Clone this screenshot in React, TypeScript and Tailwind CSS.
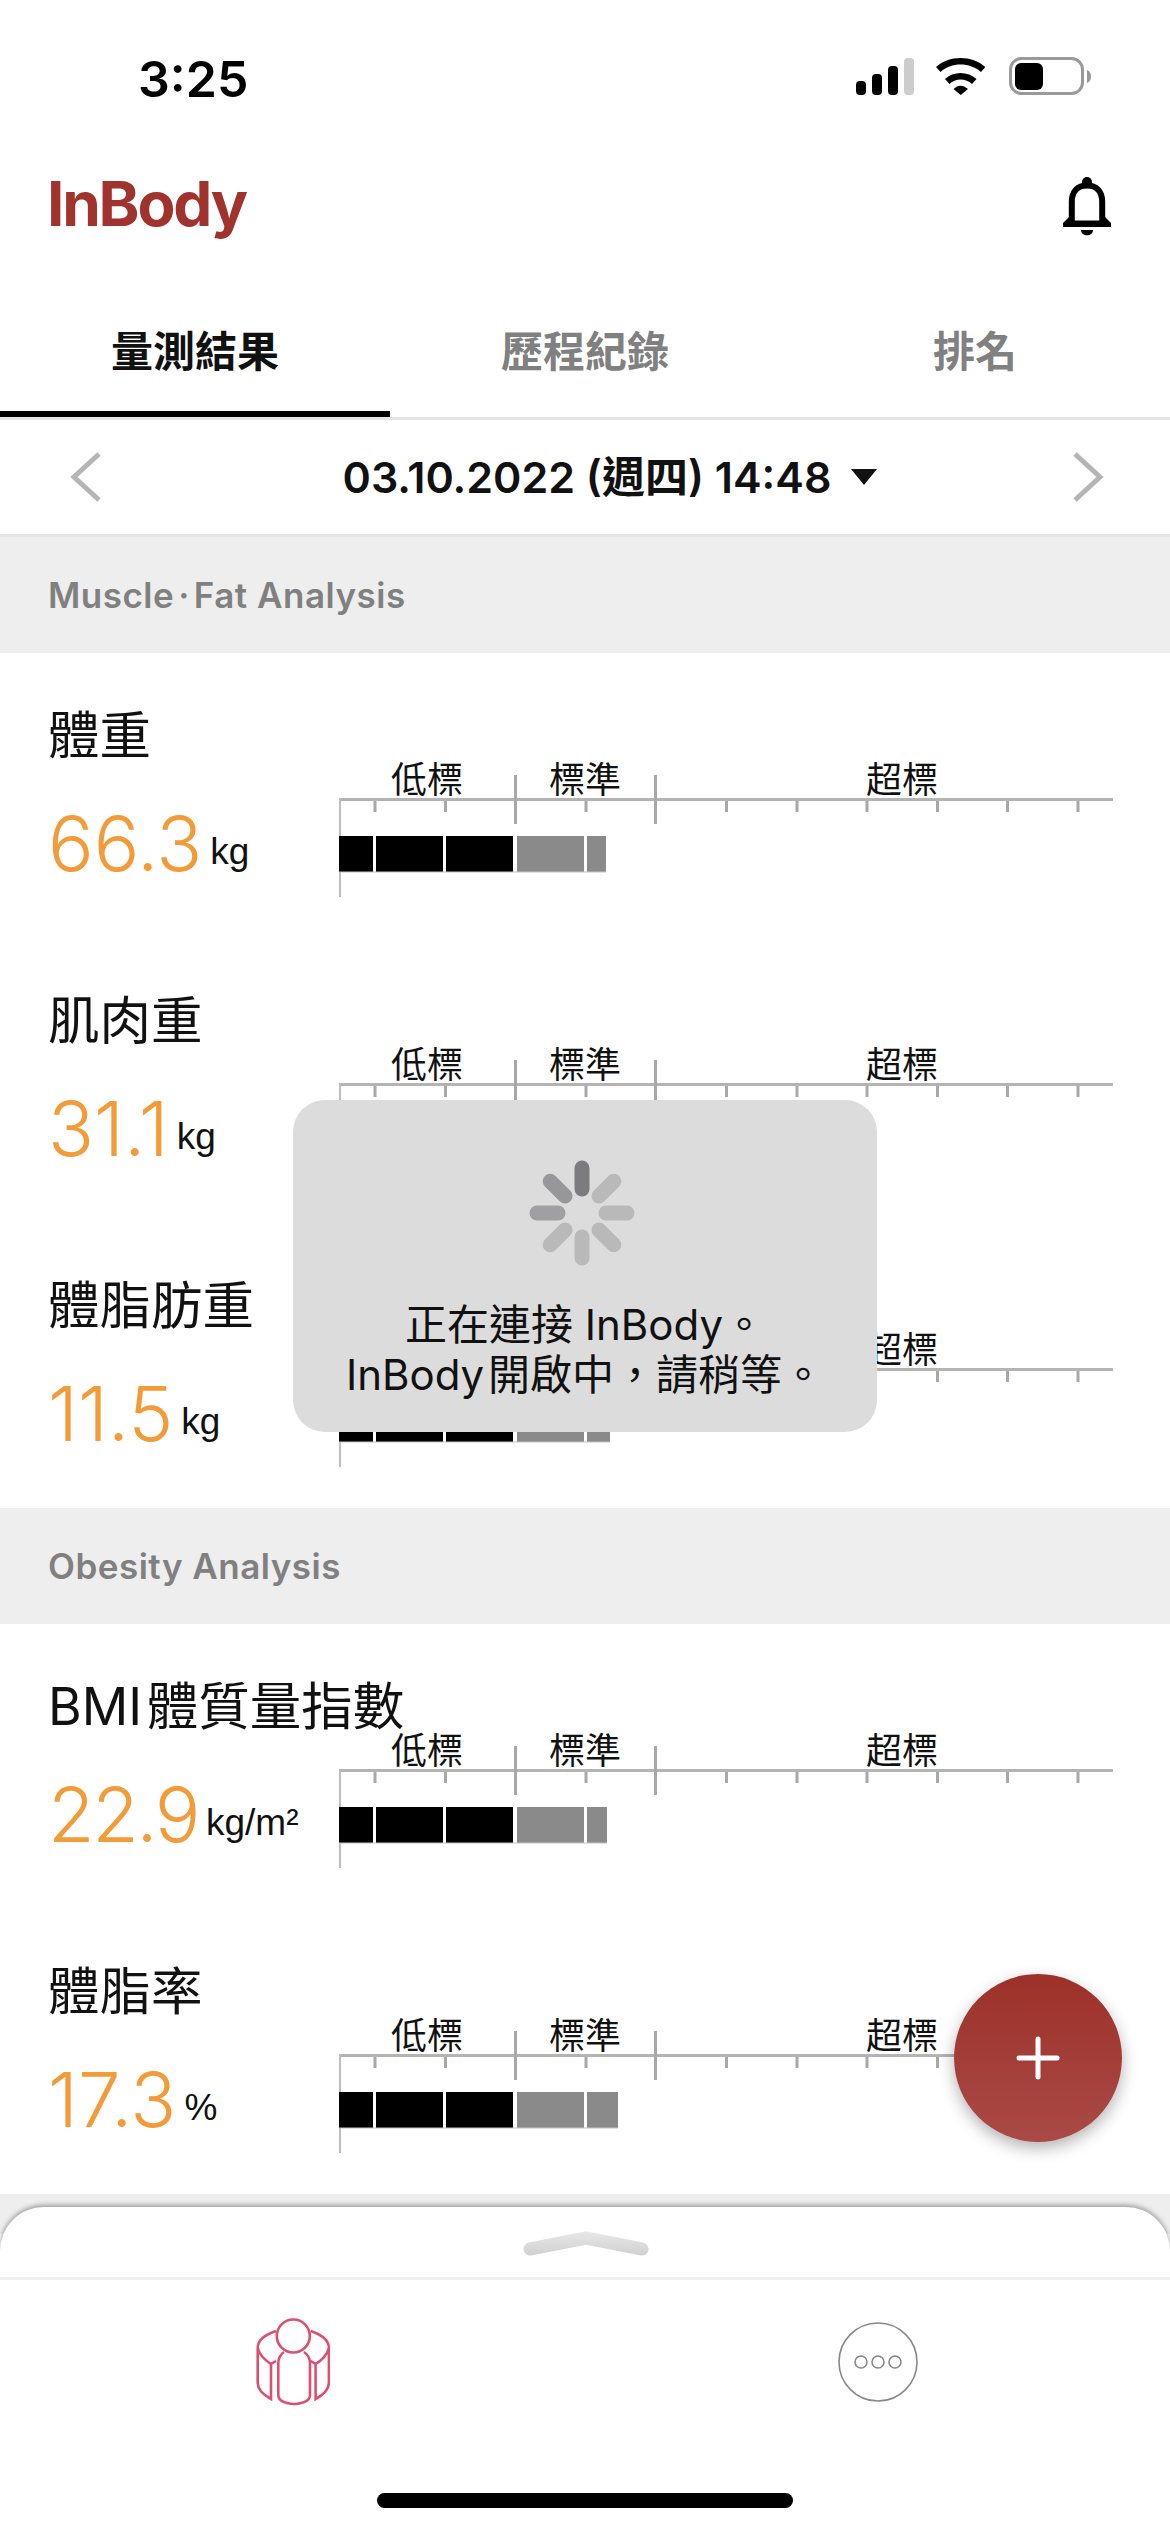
import type { ReactNode } from "react";

const majors = [176, 316];
const minors = [35.5, 106, 246.5, 387, 457.5, 527.5, 598, 668, 738.5];

type Row = { name: string; value: string; unit: string; end: number; tight?: boolean };

function Chart({ end }: { end: number }) {
  const segs: [number, number, string][] = [
    [0, 34, "#000"],
    [37, 104, "#000"],
    [107, 174, "#000"],
    [178, 245, "#8a8a8a"],
    [248, end, "#8a8a8a"],
  ];
  return (
    <div className="w-[774px] pt-[105px]">
      <div className="flex h-[44px] items-center text-[36px] leading-[44px] text-[#111]">
        <div className="w-[176px] text-center">低標</div>
        <div className="w-[140px] text-center">標準</div>
        <div className="w-[458px] whitespace-nowrap pl-[36px] text-center">超標</div>
      </div>
      <svg width="774" height="122" className="relative -mt-[27px] block">
        <rect x="0" y="23" width="774" height="3" fill="#b4b4b4" />
        <rect x="0" y="23" width="2" height="99" fill="#bdbdbd" />
        {majors.map((x) => (
          <rect key={x} x={x - 1} y="0" width="3" height="49" fill="#a8a8a8" />
        ))}
        {minors.map((x) => (
          <rect key={x} x={x - 1} y="26" width="3" height="11" fill="#a8a8a8" />
        ))}
        {segs.map(([a, b, c]) => (
          <rect key={a} x={a} y="61" width={b - a} height="36" fill={c} />
        ))}
        <rect x="0" y="96.5" width={end} height="1" fill="#c4c4c4" />
      </svg>
    </div>
  );
}

function MetricRow({ name, value, unit, end, tight }: Row) {
  return (
    <div className="flex h-[285px] bg-white">
      <div className="w-[339px] shrink-0 pl-[48px] pt-[57px]">
        <div className="h-[50px] whitespace-nowrap text-[51.5px] leading-[50px] text-[#111]">{name}</div>
        <div className="mt-[43px] flex items-baseline whitespace-nowrap">
          <span className={tight ? "text-[76px] font-light leading-[80px] tracking-[-2.5px] text-[#f29b38]" : "text-[76px] font-light leading-[80px] text-[#f29b38]"}>
            {value}
          </span>
          <span className="ml-[8px] -translate-y-[7px] font-['Liberation_Sans',sans-serif] text-[37px] leading-[40px] text-[#111]">
            {unit}
          </span>
        </div>
      </div>
      <Chart end={end} />
    </div>
  );
}

function SectionHead({ title }: { title: ReactNode }) {
  return (
    <div className="flex h-[116px] items-center bg-[#eeeeee] pl-[48px] text-[35px] font-semibold tracking-[0.5px] text-[#808080]">
      {title}
    </div>
  );
}

function Spinner() {
  const spokes = ["#7c7c80", "#b9b9b9", "#b9b9b9", "#b9b9b9", "#b9b9b9", "#b9b9b9", "#a0a0a2", "#979799"];
  return (
    <svg width="110" height="110" viewBox="-55 -55 110 110" className="-ml-[6px] block">
      {spokes.map((c, i) => (
        <line
          key={i}
          x1="0"
          y1="-24"
          x2="0"
          y2="-45"
          stroke={c}
          strokeWidth="15"
          strokeLinecap="round"
          transform={`rotate(${i * 45})`}
        />
      ))}
    </svg>
  );
}

export default function App() {
  return (
    <div className="relative h-[2532px] w-[1170px] overflow-hidden bg-white font-['Inter','Noto_Sans_CJK_TC',sans-serif]">
      {/* status bar */}
      <div className="flex h-[120px] items-start justify-between pl-[138px] pr-[77px] pt-[52px]">
        <div className="text-[50px] font-semibold leading-[54px] text-black">3:25</div>
        <div className="flex items-start gap-[22px] pt-[6px]">
          <svg width="58" height="38" className="block">
            <rect x="0" y="23" width="10" height="14" rx="4" fill="#000" />
            <rect x="16" y="16" width="10" height="21" rx="4" fill="#000" />
            <rect x="32" y="8" width="10" height="29" rx="4" fill="#000" />
            <rect x="48" y="0" width="10" height="37" rx="4" fill="#ccc" />
          </svg>
          <svg width="50" height="38" className="block">
            <path d="M0,9 C13,-3 36,-3 49.3,9 L45,14 C34,4 15,4 4.5,14 Z" fill="#000" />
            <path d="M9,21 C17,13 32,13 40.5,21 L36,26 C30,20 19,20 13.5,26 Z" fill="#000" />
            <path d="M17.5,31 C22,26.5 27,26.5 32,31 L24.7,37 Z" fill="#000" />
          </svg>
          <svg width="84" height="40" className="-mt-[1px] ml-[1px] block">
            <rect x="1.5" y="1.5" width="72" height="35" rx="11" fill="none" stroke="#9a9a9a" strokeWidth="3" />
            <rect x="6" y="6" width="28" height="27" rx="6" fill="#000" />
            <path d="M78,13 C81,14 82,17 82,19.5 C82,22 81,25 78,26 Z" fill="#9a9a9a" />
          </svg>
        </div>
      </div>

      {/* header */}
      <div className="flex h-[174px] items-center justify-between pl-[47px] pr-[59px]">
        <div className="-mt-[6px] text-[62px] font-bold leading-[70px] tracking-[-2.2px] text-[#a0332d]">InBody</div>
        <svg width="48" height="60" className="block">
          <circle cx="24" cy="5" r="5" fill="#000" />
          <path d="M8.8,44 V25 C8.8,14 15,8.5 24,8.5 C33,8.5 39.2,14 39.2,25 V44" fill="none" stroke="#000" strokeWidth="6" />
          <path d="M0,46 L6,40 V43.5 H42 V40 L48,46 V50 H0 Z" fill="#000" />
          <path d="M18,53 H30 C30,60 18,60 18,53 Z" fill="#000" />
        </svg>
      </div>

      {/* tabs */}
      <div className="grid h-[126px] grid-cols-3 border-b-[3px] border-[#e6e6e6] text-center text-[42px] font-semibold leading-[42px]">
        <div className="-mb-[3px] h-[123px] border-b-[6px] border-black pt-[37px] text-[#111]">量測結果</div>
        <div className="pt-[37px] text-[#808080]">歷程紀錄</div>
        <div className="pt-[37px] text-[#808080]">排名</div>
      </div>

      {/* date */}
      <div className="flex h-[117px] items-center justify-between border-b-[3px] border-[#e6e6e6] pl-[68px] pr-[64px]">
        <svg width="36" height="52" className="block">
          <polyline points="31,3 6,26 31,49" fill="none" stroke="#b5b5b5" strokeWidth="5" />
        </svg>
        <div className="ml-[46px] flex items-center gap-[20px]">
          <span className="text-[43px] font-semibold leading-[50px] text-[#111]">03.10.2022 (週四) 14:48</span>
          <svg width="26" height="16" className="block">
            <polygon points="0,0 26,0 13,16" fill="#111" />
          </svg>
        </div>
        <svg width="36" height="52" className="block">
          <polyline points="5,3 30,26 5,49" fill="none" stroke="#b5b5b5" strokeWidth="5" />
        </svg>
      </div>

      <SectionHead
        title={
          <>
            Muscle<span className="mx-[4px]">‧</span>Fat Analysis
          </>
        }
      />
      <MetricRow name="體重" value="66.3" unit="kg" end={267} />
      <MetricRow name="肌肉重" value="31.1" unit="kg" end={260} />
      <MetricRow name="體脂肪重" value="11.5" unit="kg" end={271} />
      <SectionHead title="Obesity Analysis" />
      <MetricRow name={"BMI\u200A體質量指數"} value="22.9" unit="kg/m²" end={268} tight />
      <MetricRow name="體脂率" value="17.3" unit="%" end={279} />
      <div className="h-[40px] bg-[#eeeeee]" />

      {/* toast */}
      <div className="absolute left-[293px] top-[1100px] flex h-[332px] w-[584px] flex-col items-center rounded-[32px] bg-[#dcdcdc] pt-[58px]">
        <Spinner />
        <div className="mt-[32px] whitespace-nowrap text-center text-[42px] leading-[50px] text-[#111]">
          <div>正在連接 InBody。</div>
          <div>{"InBody\u200A開啟中，請稍等。"}</div>
        </div>
      </div>

      {/* FAB */}
      <div className="absolute left-[954px] top-[1974px] flex h-[168px] w-[168px] items-center justify-center rounded-full bg-gradient-to-b from-[#9d3029] to-[#a94a46] shadow-[0_6px_16px_rgba(0,0,0,0.3)]">
        <svg width="44" height="44" className="block">
          <line x1="3" y1="22" x2="41" y2="22" stroke="#fff" strokeWidth="5" strokeLinecap="round" />
          <line x1="22" y1="3" x2="22" y2="41" stroke="#fff" strokeWidth="5" strokeLinecap="round" />
        </svg>
      </div>

      {/* bottom sheet */}
      <div className="absolute left-0 top-[2207px] h-[325px] w-[1170px] rounded-t-[44px] bg-white shadow-[0_-2px_5px_rgba(0,0,0,0.35)]">
        <div className="flex h-[73px] justify-center border-b-[3px] border-[#f0f0f0] pt-[24px]">
          <svg width="126" height="28" className="ml-[2px] block">
            <defs>
              <linearGradient id="h" gradientUnits="userSpaceOnUse" x1="0" y1="0" x2="0" y2="26">
                <stop offset="0" stopColor="#e8e8e8" />
                <stop offset="1" stopColor="#cfcfcf" />
              </linearGradient>
            </defs>
            <path d="M7,18 L63,7 L119,18" fill="none" stroke="url(#h)" strokeWidth="13" strokeLinecap="round" strokeLinejoin="round" />
          </svg>
        </div>
        <div className="flex h-[164px] items-center">
          <div className="flex w-[584px] justify-center pl-[2px]">
            <svg width="74" height="90" viewBox="-1 -1 74 90" className="block" fill="none" stroke="#de4f6e" strokeWidth="2.6">
              <circle cx="36.3" cy="18" r="16.5" />
              <path d="M27,34 Q21.3,38 21.3,45 V77 Q21.3,85 37,86 Q53,85 53,77 V45 Q53,38 47,34" />
              <path d="M19,13 Q0.7,19 0.7,30 V65 Q1,74 14,81 V46 L19,43 M0.7,30 Q3,39 14,46" />
              <path d="M53.6,13 Q71.9,19 71.9,30 V65 Q71.6,74 58.6,81 V46 L53.6,43 M71.9,30 Q69.6,39 58.6,46" />
            </svg>
          </div>
          <div className="flex w-[586px] justify-center pl-[2px]">
            <svg width="80" height="80" className="block" fill="none" stroke="#888" strokeWidth="1.6">
              <circle cx="40" cy="40" r="39" />
              <circle cx="23" cy="40" r="6" />
              <circle cx="40" cy="40" r="6" />
              <circle cx="57" cy="40" r="6" />
            </svg>
          </div>
        </div>
        <div className="flex justify-center pt-[49px]">
          <div className="h-[15px] w-[416px] rounded-full bg-black" />
        </div>
      </div>
    </div>
  );
}
